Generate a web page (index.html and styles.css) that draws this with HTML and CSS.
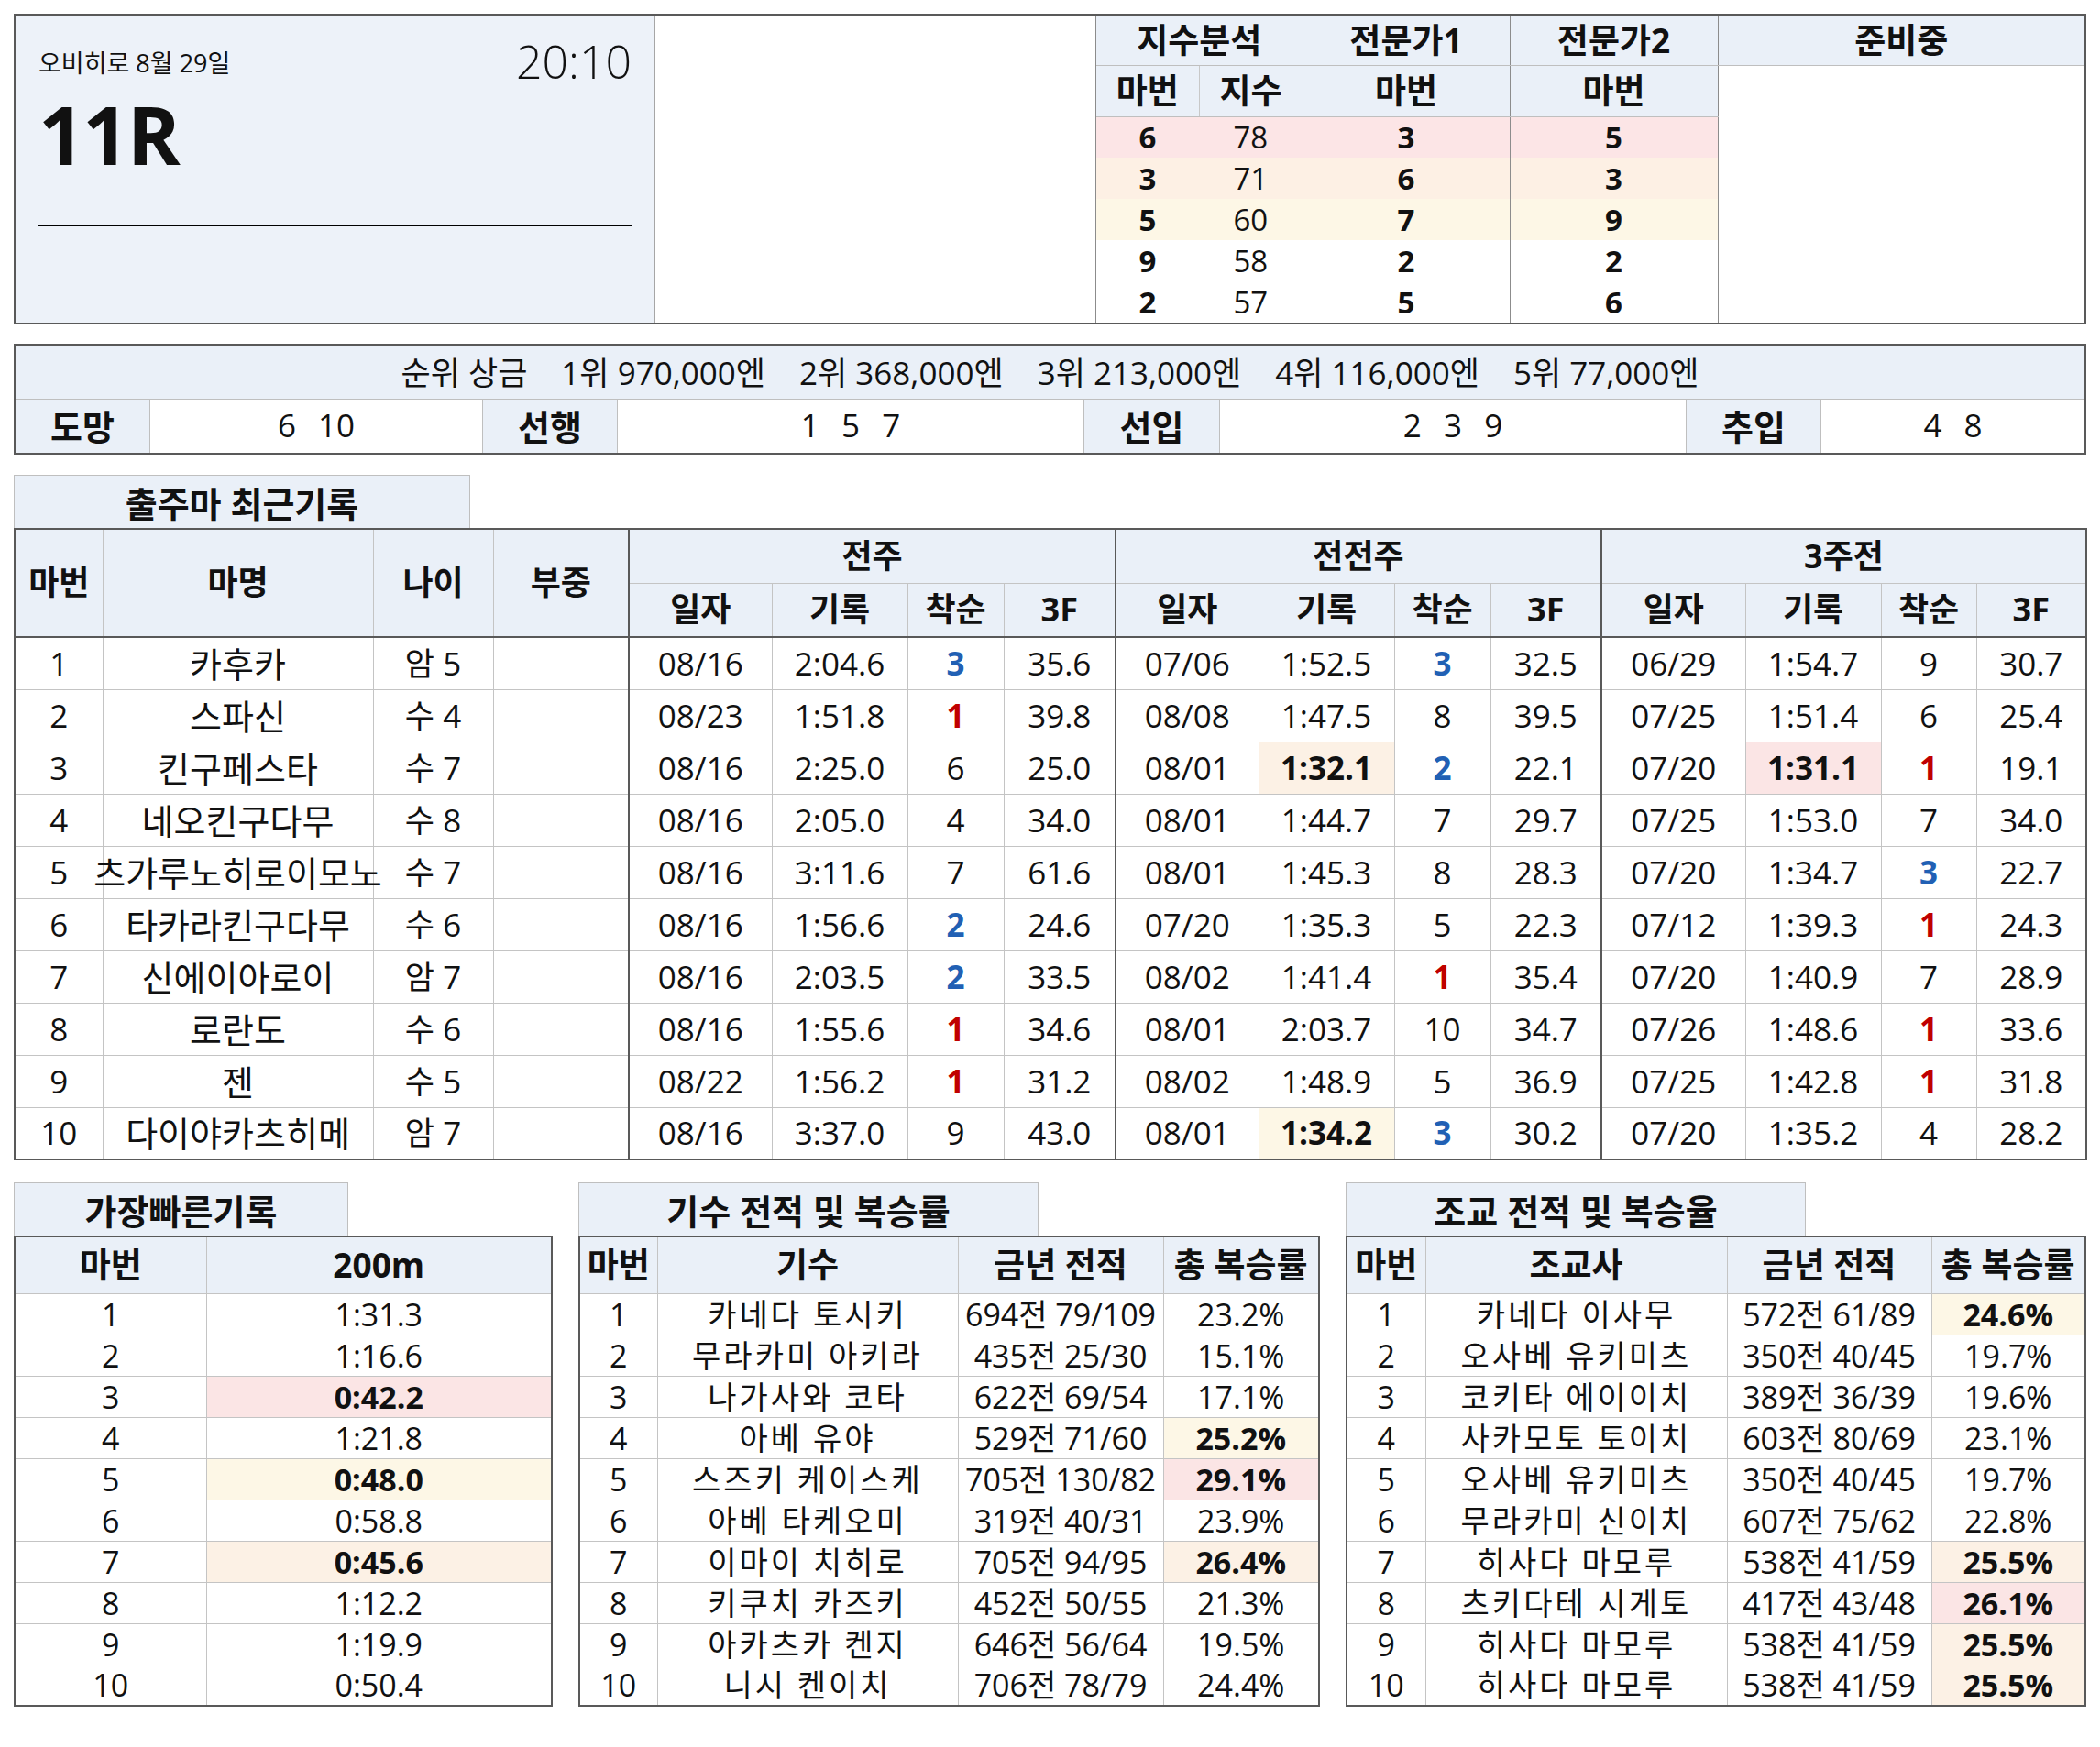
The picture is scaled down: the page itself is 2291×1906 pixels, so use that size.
FILE: index.html
```html
<!DOCTYPE html>
<html lang="ko">
<head>
<meta charset="utf-8">
<title>오비히로 11R</title>
<link rel="stylesheet" href="styles.css">
</head>
<body>
<div class="page">

  <section class="race">
    <div class="info">
      <div class="info-top">
        <div class="date">오비히로 8월 29일</div>
        <div class="time">20:10</div>
      </div>
      <div class="race-no">11R</div>
      <div class="rule"></div>
    </div>
    <div class="blank"></div>
    <table class="idx">
      <colgroup><col class="c1"><col class="c2"><col class="c3"><col class="c4"><col></colgroup>
      <tr class="h1">
        <th colspan="2" class="gr">지수분석</th>
        <th class="gr">전문가1</th>
        <th class="gr">전문가2</th>
        <th>준비중</th>
      </tr>
      <tr class="h2">
        <th class="lr">마번</th>
        <th class="gr">지수</th>
        <th class="gr">마번</th>
        <th class="gr">마번</th>
        <td rowspan="6" class="empty"></td>
      </tr>
      <tr class="pk"><td class="bd">6</td><td class="gr">78</td><td class="bd gr">3</td><td class="bd gr">5</td></tr>
      <tr class="or"><td class="bd">3</td><td class="gr">71</td><td class="bd gr">6</td><td class="bd gr">3</td></tr>
      <tr class="ye"><td class="bd">5</td><td class="gr">60</td><td class="bd gr">7</td><td class="bd gr">9</td></tr>
      <tr><td class="bd">9</td><td class="gr">58</td><td class="bd gr">2</td><td class="bd gr">2</td></tr>
      <tr><td class="bd">2</td><td class="gr">57</td><td class="bd gr">5</td><td class="bd gr">6</td></tr>
    </table>
  </section>

  <section class="prize">
    <div class="prize-head">
      <span>순위 상금</span><span>1위 970,000엔</span><span>2위 368,000엔</span><span>3위 213,000엔</span><span>4위 116,000엔</span><span>5위 77,000엔</span>
    </div>
    <div class="styles">
      <div class="lbl">도망</div><div class="val">6  10</div>
      <div class="lbl">선행</div><div class="val">1  5  7</div>
      <div class="lbl">선입</div><div class="val">2  3  9</div>
      <div class="lbl">추입</div><div class="val">4  8</div>
    </div>
  </section>

  <div class="tab tab-main">출주마 최근기록</div>
  <table class="main">
    <colgroup>
      <col style="width:96px"><col style="width:295px"><col style="width:131px"><col style="width:148px">
      <col style="width:156px"><col style="width:148px"><col style="width:105px"><col style="width:122px">
      <col style="width:156px"><col style="width:148px"><col style="width:105px"><col style="width:121px">
      <col style="width:157px"><col style="width:148px"><col style="width:104px"><col style="width:120px">
    </colgroup>
    <thead>
      <tr>
        <th rowspan="2">마번</th><th rowspan="2">마명</th><th rowspan="2">나이</th><th rowspan="2">부중</th>
        <th colspan="4" class="gl">전주</th>
        <th colspan="4" class="gl">전전주</th>
        <th colspan="4" class="gl">3주전</th>
      </tr>
      <tr>
        <th class="gl">일자</th><th>기록</th><th>착순</th><th>3F</th>
        <th class="gl">일자</th><th>기록</th><th>착순</th><th>3F</th>
        <th class="gl">일자</th><th>기록</th><th>착순</th><th>3F</th>
      </tr>
    </thead>
    <tbody>
      <tr><td>1</td><td class="kn">카후카</td><td>암 5</td><td></td>
        <td class="gl">08/16</td><td>2:04.6</td><td class="b">3</td><td>35.6</td>
        <td class="gl">07/06</td><td>1:52.5</td><td class="b">3</td><td>32.5</td>
        <td class="gl">06/29</td><td>1:54.7</td><td>9</td><td>30.7</td></tr>
      <tr><td>2</td><td class="kn">스파신</td><td>수 4</td><td></td>
        <td class="gl">08/23</td><td>1:51.8</td><td class="r">1</td><td>39.8</td>
        <td class="gl">08/08</td><td>1:47.5</td><td>8</td><td>39.5</td>
        <td class="gl">07/25</td><td>1:51.4</td><td>6</td><td>25.4</td></tr>
      <tr><td>3</td><td class="kn">킨구페스타</td><td>수 7</td><td></td>
        <td class="gl">08/16</td><td>2:25.0</td><td>6</td><td>25.0</td>
        <td class="gl">08/01</td><td class="hl-o">1:32.1</td><td class="b">2</td><td>22.1</td>
        <td class="gl">07/20</td><td class="hl-p">1:31.1</td><td class="r">1</td><td>19.1</td></tr>
      <tr><td>4</td><td class="kn">네오킨구다무</td><td>수 8</td><td></td>
        <td class="gl">08/16</td><td>2:05.0</td><td>4</td><td>34.0</td>
        <td class="gl">08/01</td><td>1:44.7</td><td>7</td><td>29.7</td>
        <td class="gl">07/25</td><td>1:53.0</td><td>7</td><td>34.0</td></tr>
      <tr><td>5</td><td class="kn"><span class="squeeze">츠가루노히로이모노</span></td><td>수 7</td><td></td>
        <td class="gl">08/16</td><td>3:11.6</td><td>7</td><td>61.6</td>
        <td class="gl">08/01</td><td>1:45.3</td><td>8</td><td>28.3</td>
        <td class="gl">07/20</td><td>1:34.7</td><td class="b">3</td><td>22.7</td></tr>
      <tr><td>6</td><td class="kn">타카라킨구다무</td><td>수 6</td><td></td>
        <td class="gl">08/16</td><td>1:56.6</td><td class="b">2</td><td>24.6</td>
        <td class="gl">07/20</td><td>1:35.3</td><td>5</td><td>22.3</td>
        <td class="gl">07/12</td><td>1:39.3</td><td class="r">1</td><td>24.3</td></tr>
      <tr><td>7</td><td class="kn">신에이아로이</td><td>암 7</td><td></td>
        <td class="gl">08/16</td><td>2:03.5</td><td class="b">2</td><td>33.5</td>
        <td class="gl">08/02</td><td>1:41.4</td><td class="r">1</td><td>35.4</td>
        <td class="gl">07/20</td><td>1:40.9</td><td>7</td><td>28.9</td></tr>
      <tr><td>8</td><td class="kn">로란도</td><td>수 6</td><td></td>
        <td class="gl">08/16</td><td>1:55.6</td><td class="r">1</td><td>34.6</td>
        <td class="gl">08/01</td><td>2:03.7</td><td>10</td><td>34.7</td>
        <td class="gl">07/26</td><td>1:48.6</td><td class="r">1</td><td>33.6</td></tr>
      <tr><td>9</td><td class="kn">젠</td><td>수 5</td><td></td>
        <td class="gl">08/22</td><td>1:56.2</td><td class="r">1</td><td>31.2</td>
        <td class="gl">08/02</td><td>1:48.9</td><td>5</td><td>36.9</td>
        <td class="gl">07/25</td><td>1:42.8</td><td class="r">1</td><td>31.8</td></tr>
      <tr><td>10</td><td class="kn">다이야카츠히메</td><td>암 7</td><td></td>
        <td class="gl">08/16</td><td>3:37.0</td><td>9</td><td>43.0</td>
        <td class="gl">08/01</td><td class="hl-y">1:34.2</td><td class="b">3</td><td>30.2</td>
        <td class="gl">07/20</td><td>1:35.2</td><td>4</td><td>28.2</td></tr>
    </tbody>
  </table>

  <div class="bottom">
    <div class="block block-fast">
      <div class="tab tab-fast">가장빠른기록</div>
      <table class="sub">
        <colgroup><col style="width:209px"><col></colgroup>
        <thead><tr><th>마번</th><th>200m</th></tr></thead>
        <tbody>
          <tr><td>1</td><td>1:31.3</td></tr>
          <tr><td>2</td><td>1:16.6</td></tr>
          <tr><td>3</td><td class="hl-p">0:42.2</td></tr>
          <tr><td>4</td><td>1:21.8</td></tr>
          <tr><td>5</td><td class="hl-y">0:48.0</td></tr>
          <tr><td>6</td><td>0:58.8</td></tr>
          <tr><td>7</td><td class="hl-o">0:45.6</td></tr>
          <tr><td>8</td><td>1:12.2</td></tr>
          <tr><td>9</td><td>1:19.9</td></tr>
          <tr><td>10</td><td>0:50.4</td></tr>
        </tbody>
      </table>
    </div>

    <div class="block block-wide">
      <div class="tab tab-wide">기수 전적 및 복승률</div>
      <table class="sub">
        <colgroup><col style="width:85px"><col style="width:328px"><col style="width:224px"><col></colgroup>
        <thead><tr><th>마번</th><th>기수</th><th>금년 전적</th><th>총 복승률</th></tr></thead>
        <tbody>
          <tr><td>1</td><td class="kn">카네다 토시키</td><td>694전 79/109</td><td>23.2%</td></tr>
          <tr><td>2</td><td class="kn">무라카미 아키라</td><td>435전 25/30</td><td>15.1%</td></tr>
          <tr><td>3</td><td class="kn">나가사와 코타</td><td>622전 69/54</td><td>17.1%</td></tr>
          <tr><td>4</td><td class="kn">아베 유야</td><td>529전 71/60</td><td class="hl-y">25.2%</td></tr>
          <tr><td>5</td><td class="kn">스즈키 케이스케</td><td>705전 130/82</td><td class="hl-p">29.1%</td></tr>
          <tr><td>6</td><td class="kn">아베 타케오미</td><td>319전 40/31</td><td>23.9%</td></tr>
          <tr><td>7</td><td class="kn">이마이 치히로</td><td>705전 94/95</td><td class="hl-o">26.4%</td></tr>
          <tr><td>8</td><td class="kn">키쿠치 카즈키</td><td>452전 50/55</td><td>21.3%</td></tr>
          <tr><td>9</td><td class="kn">아카츠카 켄지</td><td>646전 56/64</td><td>19.5%</td></tr>
          <tr><td>10</td><td class="kn">니시 켄이치</td><td>706전 78/79</td><td>24.4%</td></tr>
        </tbody>
      </table>
    </div>

    <div class="block block-wide">
      <div class="tab tab-wide">조교 전적 및 복승율</div>
      <table class="sub">
        <colgroup><col style="width:86px"><col style="width:329px"><col style="width:223px"><col></colgroup>
        <thead><tr><th>마번</th><th>조교사</th><th>금년 전적</th><th>총 복승률</th></tr></thead>
        <tbody>
          <tr><td>1</td><td class="kn">카네다 이사무</td><td>572전 61/89</td><td class="hl-y">24.6%</td></tr>
          <tr><td>2</td><td class="kn">오사베 유키미츠</td><td>350전 40/45</td><td>19.7%</td></tr>
          <tr><td>3</td><td class="kn">코키타 에이이치</td><td>389전 36/39</td><td>19.6%</td></tr>
          <tr><td>4</td><td class="kn">사카모토 토이치</td><td>603전 80/69</td><td>23.1%</td></tr>
          <tr><td>5</td><td class="kn">오사베 유키미츠</td><td>350전 40/45</td><td>19.7%</td></tr>
          <tr><td>6</td><td class="kn">무라카미 신이치</td><td>607전 75/62</td><td>22.8%</td></tr>
          <tr><td>7</td><td class="kn">히사다 마모루</td><td>538전 41/59</td><td class="hl-o">25.5%</td></tr>
          <tr><td>8</td><td class="kn">츠키다테 시게토</td><td>417전 43/48</td><td class="hl-p">26.1%</td></tr>
          <tr><td>9</td><td class="kn">히사다 마모루</td><td>538전 41/59</td><td class="hl-o">25.5%</td></tr>
          <tr><td>10</td><td class="kn">히사다 마모루</td><td>538전 41/59</td><td class="hl-o">25.5%</td></tr>
        </tbody>
      </table>
    </div>
  </div>

</div>
</body>
</html>
```

FILE: styles.css
```css
* { box-sizing: border-box; }

body {
  margin: 0;
  padding: 15px 15px 30px 15px;
  background: #ffffff;
  color: #111111;
  font-family: "Open Sans", "Noto Sans CJK KR", sans-serif;
}

.page { width: 2261px; }

/* ---------- race header box ---------- */
.race {
  display: flex;
  height: 339px;
  border: 2px solid #595959;
}

.info {
  width: 698px;
  flex: none;
  background: #edf2f9;
  border-right: 1px solid #a6a6a6;
  padding: 0 25px 0 25px;
}

.info-top {
  display: flex;
  justify-content: space-between;
  align-items: flex-start;
  padding-top: 20px;
}

.date {
  font-size: 27px;
  line-height: 30px;
  margin-top: 17px;
}

.time {
  font-size: 50px;
  font-weight: 300;
  line-height: 60px;
}

.race-no {
  font-size: 88px;
  font-weight: 700;
  line-height: 90px;
  margin-top: 4px;
  letter-spacing: -2px;
}

.rule {
  height: 2px;
  background: #000000;
  margin-top: 54px;
}

.blank {
  width: 481px;
  flex: none;
  border-right: 1px solid #8c8c8c;
}

.idx {
  flex: 1;
  border-collapse: collapse;
  table-layout: fixed;
  height: 100%;
}
.idx .c1 { width: 112px; }
.idx .c2 { width: 113px; }
.idx .c3 { width: 226px; }
.idx .c4 { width: 227px; }

.idx th, .idx td {
  padding: 0;
  text-align: center;
  font-size: 33px;
  line-height: 40px;
}
.idx th {
  background: #eaf0f8;
  font-weight: 700;
  font-size: 37px;
  border-bottom: 1px solid #bfbfbf;
}
.idx .h1 { height: 54px; }
.idx .h2 { height: 56px; }
.idx tr { height: 45px; }
.idx .gr { border-right: 1px solid #8c8c8c; }
.idx .lr { border-right: 1px solid #c8c8c8; }
.idx .bd { font-weight: 700; }
.idx .empty { background: #ffffff; }
.idx .pk td { background: #fce5e6; }
.idx .or td { background: #fdf0e4; }
.idx .ye td { background: #fdf7e6; }

/* ---------- prize box ---------- */
.prize {
  margin-top: 21px;
  border: 2px solid #595959;
}

.prize-head {
  height: 59px;
  background: #eaf0f8;
  border-bottom: 1px solid #bfbfbf;
  display: flex;
  justify-content: center;
  align-items: center;
  font-size: 35px;
  padding-bottom: 4px;
}
.prize-head span + span { margin-left: 37px; }

.styles {
  display: grid;
  grid-template-columns: 146px 363px 147px 509px 148px 509px 147px 1fr;
  height: 58px;
}
.styles > div {
  display: flex;
  justify-content: center;
  align-items: center;
  font-size: 35px;
  white-space: pre;
  word-spacing: 3px;
  padding-bottom: 3px;
}
.styles > div + div { border-left: 1px solid #bfbfbf; }
.styles .lbl { background: #eaf0f8; font-weight: 700; font-size: 38px; }
.styles .val { background: #ffffff; }

/* ---------- tabs ---------- */
.tab {
  height: 58px;
  background: #eaf0f8;
  border: 1px solid #bfbfbf;
  border-bottom: none;
  display: flex;
  justify-content: center;
  align-items: center;
  font-size: 38px;
  font-weight: 700;
}
.tab-main { width: 498px; margin-top: 22px; }
.tab-fast { width: 365px; }
.tab-wide { width: 502px; }

/* ---------- main table ---------- */
.main {
  width: 2261px;
  border-collapse: collapse;
  table-layout: fixed;
  border: 2px solid #595959;
}
.main th, .main td {
  padding: 0;
  text-align: center;
  white-space: nowrap;
  font-size: 35px;
  border: 1px solid #c4c4c4;
}
.main th {
  background: #eaf0f8;
  font-weight: 700;
  height: 59px;
  line-height: 40px;
  font-size: 36px;
}
.main td {
  height: 57px;
  line-height: 40px;
}
.main td.kn { font-size: 38px; }
.main .gl { border-left: 2px solid #595959; }
.main th[rowspan] { border-bottom: 2px solid #595959; }
.main thead tr:last-child th { border-bottom: 2px solid #595959; }
.main tbody tr:first-child td { border-top: 2px solid #595959; }

.squeeze {
  display: inline-block;
  margin: 0 -30px;
}

.r { color: #c00000; font-weight: 700; }
.b { color: #2160b4; font-weight: 700; }
.hl-p { background: #fbe5e5; font-weight: 700; }
.hl-o { background: #fcf1e5; font-weight: 700; }
.hl-y { background: #fdf7e6; font-weight: 700; }

/* ---------- bottom tables ---------- */
.bottom {
  display: flex;
  gap: 28px;
  margin-top: 24px;
}
.block-fast { width: 588px; }
.block-wide { width: 809px; }
.block-wide:last-child { width: 808px; }

.sub {
  width: 100%;
  border-collapse: collapse;
  table-layout: fixed;
  border: 2px solid #595959;
}
.sub th, .sub td {
  padding: 0;
  text-align: center;
  white-space: nowrap;
  font-size: 34px;
  line-height: 40px;
  border: 1px solid #c4c4c4;
}
.sub th {
  background: #eaf0f8;
  font-weight: 700;
  font-size: 37px;
  height: 62px;
}
.sub td { height: 45px; }
.sub td.kn { font-size: 34px; letter-spacing: 3px; }
```
